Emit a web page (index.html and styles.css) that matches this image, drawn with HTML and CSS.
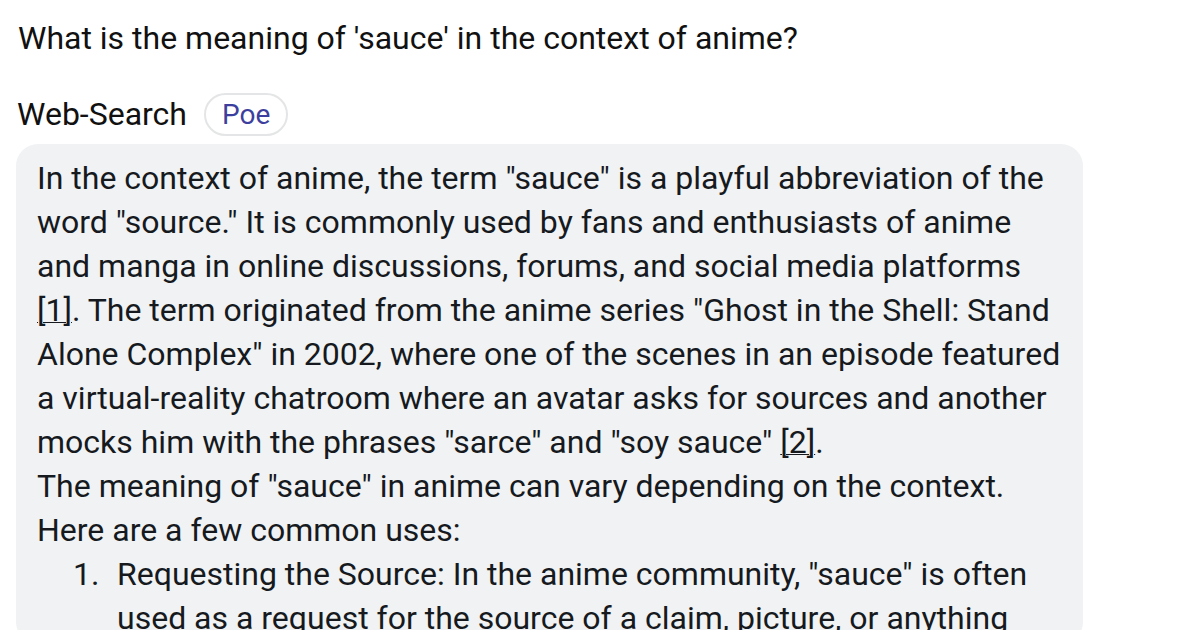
FILE: index.html
```html
<!DOCTYPE html>
<html>
<head>
<meta charset="utf-8">
<link rel="stylesheet" href="styles.css">
</head>
<body>
<div class="page">
  <div class="question">What is the meaning of 'sauce' in the context of anime?</div>
  <div class="bot-row">
    <span class="bot-name">Web-Search</span>
    <span class="pill">Poe</span>
  </div>
  <div class="bubble">
    <p>In the context of anime, the term "sauce" is a playful abbreviation of the word "source." It is commonly used by fans and enthusiasts of anime and manga in online discussions, forums, and social media platforms <a class="ref">[1]</a>. The term originated from the anime series "Ghost in the Shell: Stand Alone Complex" in 2002, where one of the scenes in an episode featured a virtual-reality chatroom where an avatar asks for sources and another mocks him with the phrases "sarce" and "soy sauce" <a class="ref">[2]</a>.</p>
    <p>The meaning of "sauce" in anime can vary depending on the context. Here are a few common uses:</p>
    <ol class="uses">
      <li>Requesting the Source: In the anime community, "sauce" is often used as a request for the source of a claim, picture, or anything</li>
    </ol>
  </div>
</div>
</body>
</html>
```
FILE: styles.css
```css
html, body {
  margin: 0;
  padding: 0;
  background: #ffffff;
  overflow: hidden;
}
body {
  font-family: Roboto, "Noto Sans", sans-serif;
  color: #111;
}
.page {
  padding: 16px 16px 0 16px;
}
.question {
  font-size: 32px;
  line-height: 44px;
  color: #111;
  padding-left: 2px;
}
.bot-row {
  display: flex;
  align-items: center;
  gap: 17px;
  margin-top: 32px;
  height: 44px;
}
.bot-name {
  font-size: 32px;
  color: #111;
  padding-left: 1px;
}
.pill {
  display: inline-flex;
  align-items: center;
  height: 39px;
  padding: 0 16px;
  border: 2px solid #e4e5e6;
  border-radius: 22px;
  font-size: 28px;
  color: #3d3f9e;
}
.bubble {
  margin-top: 8px;
  width: 1067px;
  box-sizing: border-box;
  background: #f0f2f3;
  border-radius: 22px;
  padding: 12px 21px 0 21px;
  font-size: 32px;
  line-height: 44px;
  color: #161a1e;
  height: 500px;
}
.bubble p {
  margin: 0;
}
.ref {
  color: #161a1e;
  text-decoration: underline;
  text-decoration-thickness: 1px;
  text-underline-offset: 1px;
}
.uses {
  margin: 0;
  padding-left: 80px;
  list-style: none;
  counter-reset: item;
}
.uses li {
  counter-increment: item;
}
.uses li::before {
  content: counter(item) ".";
  display: inline-block;
  width: 44px;
  margin-left: -44px;
}
```
